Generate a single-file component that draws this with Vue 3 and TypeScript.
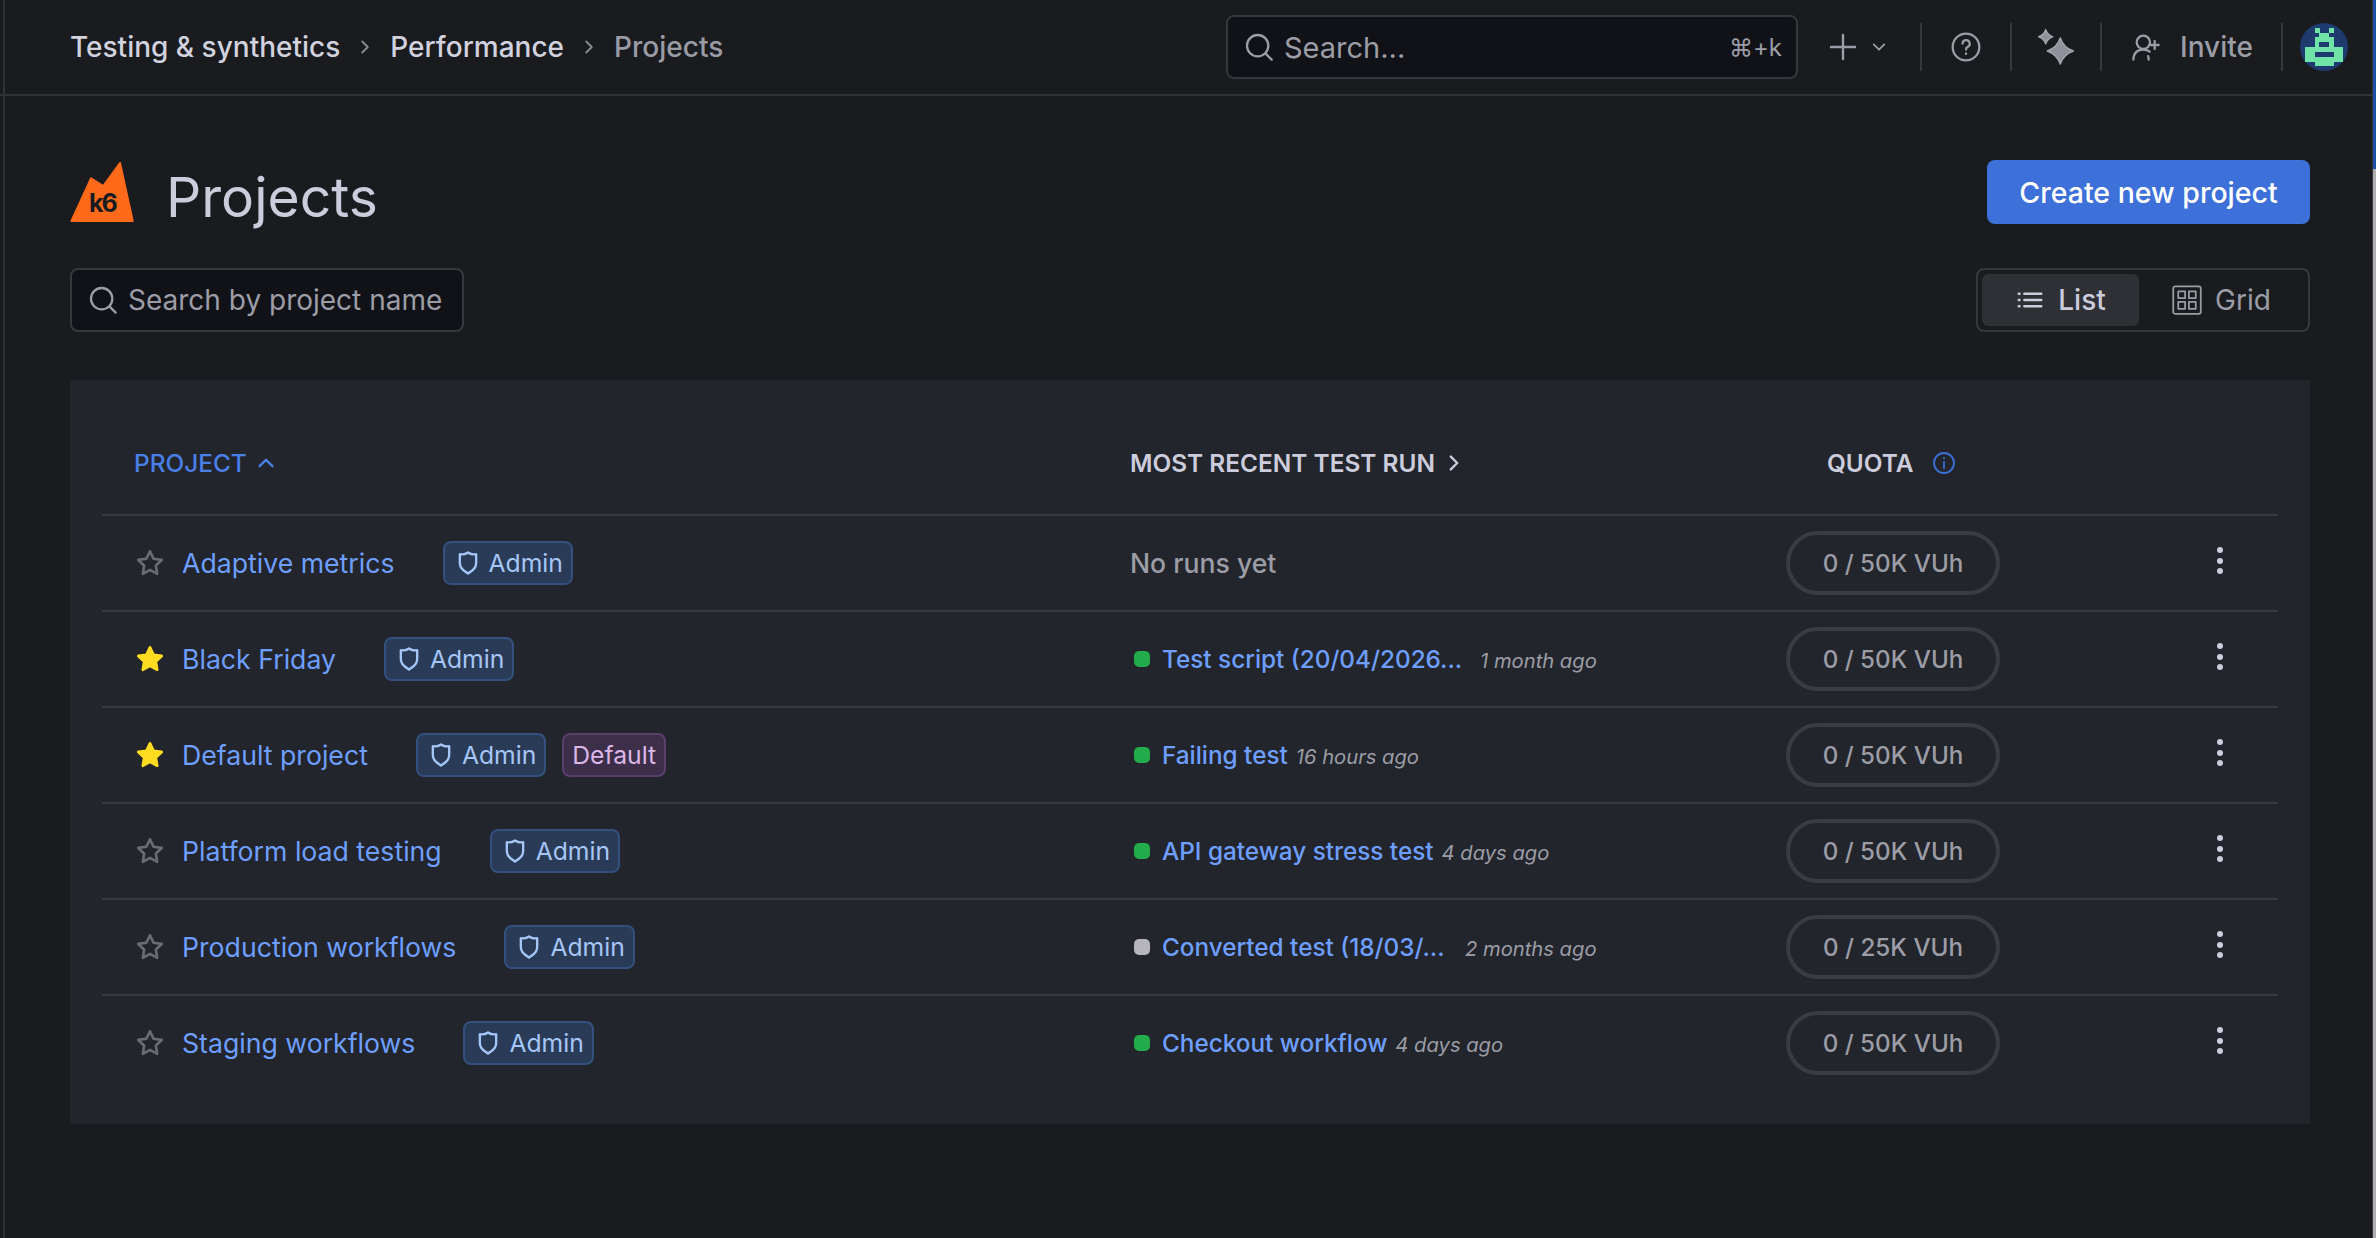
<script setup lang="ts">
interface Run { name: string; ago: string; status: 'ok' | 'idle'; width?: number }
interface Project { name: string; starred: boolean; isDefault?: boolean; run: Run | null; quota: string }

const projects: Project[] = [
  { name: 'Adaptive metrics', starred: false, run: null, quota: '0 / 50K VUh' },
  { name: 'Black Friday', starred: true, run: { name: 'Test script (20/04/2026...', ago: '1 month ago', status: 'ok', width: 310 }, quota: '0 / 50K VUh' },
  { name: 'Default project', starred: true, isDefault: true, run: { name: 'Failing test', ago: '16 hours ago', status: 'ok' }, quota: '0 / 50K VUh' },
  { name: 'Platform load testing', starred: false, run: { name: 'API gateway stress test', ago: '4 days ago', status: 'ok' }, quota: '0 / 50K VUh' },
  { name: 'Production workflows', starred: false, run: { name: 'Converted test (18/03/...', ago: '2 months ago', status: 'idle', width: 295 }, quota: '0 / 25K VUh' },
  { name: 'Staging workflows', starred: false, run: { name: 'Checkout workflow', ago: '4 days ago', status: 'ok' }, quota: '0 / 50K VUh' },
]
const shield = 'M19.63,3.65a1,1,0,0,0-.84-.2,8,8,0,0,1-6.22-1.27,1,1,0,0,0-1.14,0A8,8,0,0,1,5.21,3.45a1,1,0,0,0-.84.2A1,1,0,0,0,4,4.43v7.45a9,9,0,0,0,3.77,7.33l3.65,2.6a1,1,0,0,0,1.16,0l3.65-2.6A9,9,0,0,0,20,11.88V4.43A1,1,0,0,0,19.63,3.65ZM18,11.88a7,7,0,0,1-2.93,5.7L12,19.77,8.93,17.58A7,7,0,0,1,6,11.88V5.58a10,10,0,0,0,6-1.39,10,10,0,0,0,6,1.39Z'
const star = 'M12 3.2l2.7 5.6 6.1.9-4.4 4.3 1 6.1L12 17.2l-5.4 2.9 1-6.1-4.4-4.3 6.1-.9z'
</script>

<template>
  <div class="page">
    <header class="topbar">
      <nav class="crumbs">
        <span>Testing &amp; synthetics</span>
        <svg class="sep" viewBox="0 0 24 24"><path d="M9 6l6 6-6 6" /></svg>
        <span>Performance</span>
        <svg class="sep" viewBox="0 0 24 24"><path d="M9 6l6 6-6 6" /></svg>
        <span class="crumb-last">Projects</span>
      </nav>
      <div class="top-actions">
        <div class="global-search">
          <svg class="ico-search" viewBox="0 0 24 24"><circle cx="11" cy="11" r="8" /><path d="M17 17l4.500 4.500" /></svg>
          <span class="gs-text">Search...</span>
          <span class="gs-key">⌘+k</span>
        </div>
        <div class="plus">
          <svg class="plus-ico" viewBox="0 0 24 24"><path d="M12 3v18M3 12h18" /></svg>
          <svg class="plus-chev" viewBox="0 0 24 24"><path d="M5 8.500l7 7 7-7" /></svg>
        </div>
        <i class="vr" />
        <div class="top-btn">
          <svg class="ico32" viewBox="0 0 24 24"><circle cx="12" cy="12" r="10" /><path d="M9.400 9.500a2.700 2.700 0 1 1 4 2.400c-.9.500-1.400 1-1.400 2" /><path d="M12 16.800v.4" /></svg>
        </div>
        <i class="vr" />
        <div class="top-btn">
          <svg class="spark" viewBox="0 0 40 40">
            <path d="M24.300 11Q27.500 20.800 37.300 24Q27.500 27.200 24.300 37Q21 27.200 11.300 24Q21 20.800 24.300 11Z" />
            <path d="M9.700 2.700Q11.500 8 16.700 9.700Q11.500 11.400 9.700 16.700Q8 11.400 2.700 9.700Q8 8 9.700 2.700Z" />
          </svg>
        </div>
        <i class="vr" />
        <div class="invite">
          <svg class="ico32" viewBox="0 0 24 24"><circle cx="10" cy="8.500" r="5" /><path d="M2.500 21.500c.3-4.800 3-7.500 7.500-7.500 2 0 3.500.5 4.800 1.500M14 21.500c0-1-.1-1.900-.4-2.700M18.500 7.500v6M15.500 10.500h6" /></svg>
          <span>Invite</span>
        </div>
        <i class="vr" />
        <svg class="avatar" viewBox="0 0 48 48" shape-rendering="crispEdges">
          <circle cx="24" cy="24" r="24" fill="#1f3a6e" shape-rendering="auto" />
          <g fill="#6fe3a8">
            <rect x="14.500" y="4.700" width="5" height="5" />
            <rect x="29" y="4.700" width="5" height="5" />
            <rect x="19" y="9.500" width="10" height="5" />
            <rect x="14.500" y="14.300" width="19" height="10" />
            <rect x="4.700" y="24" width="38.600" height="14.500" />
            <rect x="14.500" y="38" width="19" height="5" />
          </g>
          <rect x="19" y="19" width="10" height="5" fill="#1f3a6e" />
          <rect x="14.500" y="29" width="19" height="5" fill="#1f3a6e" />
        </svg>
      </div>
    </header>

    <main class="content">
      <div class="title-row">
        <div class="title">
          <div class="logo">
            <svg viewBox="0 0 64 62" class="logo-mark"><path d="M1.500 59 L21 16.300 L33.300 24 L50 1 L62.700 59 Z" fill="#ff6a1a" stroke="#ff6a1a" stroke-width="2" stroke-linejoin="round" /></svg>
            <span class="logo-text">k6</span>
          </div>
          <h1>Projects</h1>
        </div>
        <button class="primary">Create new project</button>
      </div>

      <div class="filter-row">
        <label class="search">
          <svg class="ico-search" viewBox="0 0 24 24"><circle cx="11" cy="11" r="8" /><path d="M17 17l4.500 4.500" /></svg>
          <span>Search by project name</span>
        </label>
        <div class="toggle">
          <div class="toggle-item active">
            <svg class="ico28 list-ico" viewBox="0 0 24 24"><path d="M7.500 7H21M7.500 12H21M7.500 17H21M3 7h.6M3 12h.6M3 17h.6" /></svg>
            <span>List</span>
          </div>
          <div class="toggle-item">
            <svg class="ico28 thin" viewBox="0 0 24 24"><rect x="1" y="1" width="22" height="22" rx="1.500" /><rect x="5" y="5" width="5.500" height="5.500" /><rect x="13.500" y="5" width="5.500" height="5.500" /><rect x="5" y="13.500" width="5.500" height="5.500" /><rect x="13.500" y="13.500" width="5.500" height="5.500" /></svg>
            <span>Grid</span>
          </div>
        </div>
      </div>

      <section class="table">
        <div class="row head">
          <div class="th sorted">PROJECT
            <svg class="th-ico" viewBox="0 0 24 24"><path d="M5 15.500l7-7 7 7" /></svg>
          </div>
          <div class="th">MOST RECENT TEST RUN
            <svg class="th-ico" viewBox="0 0 24 24"><path d="M8.500 5l7 7-7 7" /></svg>
          </div>
          <div class="th quota-th">QUOTA
            <svg class="info" viewBox="0 0 24 24"><circle cx="12" cy="12" r="10" /><path d="M12 11v6M12 7v.4" /></svg>
          </div>
          <div />
        </div>

        <div v-for="p in projects" :key="p.name" class="row">
          <div class="cell-project">
            <svg v-if="p.starred" class="star on" viewBox="0 0 24 24"><path :d="star" /></svg>
            <svg v-else class="star" viewBox="0 0 24 24"><path :d="star" /></svg>
            <a class="link pname">{{ p.name }}</a>
            <span class="tag admin">
              <svg class="tag-ico" viewBox="0 0 24 24"><path :d="shield" /></svg>Admin
            </span>
            <span v-if="p.isDefault" class="tag def">Default</span>
          </div>
          <div class="cell-run">
            <span v-if="!p.run" class="no-runs">No runs yet</span>
            <template v-else>
              <i class="dot" :class="p.run.status" />
              <a class="link run-name" :style="p.run.width ? { width: p.run.width + 'px' } : undefined">{{ p.run.name }}</a>
              <em class="ago">{{ p.run.ago }}</em>
            </template>
          </div>
          <div><span class="pill">{{ p.quota }}</span></div>
          <div class="kebab"><i /><i /><i /></div>
        </div>
      </section>
    </main>
  </div>
</template>

<style>
html, body { margin: 0; background: #181b1f; }
</style>

<style scoped>
* { box-sizing: border-box; }
.page {
  position: relative; width: 2376px; height: 1238px; overflow: hidden; background: #191b1f;
  font-family: Inter, "Noto Sans", sans-serif; font-size: 28px; color: #ccccdc;
}
/* Window chrome: thin rail on the left, edge strip on the right */
.page::before { content: ""; position: absolute; left: 3px; top: 0; bottom: 0; width: 2px; background: #2f3136; }
.page::after {
  content: ""; position: absolute; right: 0; top: 0; bottom: 0; width: 3px; border-left: 1px solid #34363b;
  background: linear-gradient(#1a50a8 0 169px, #aeaeb0 169px);
}
svg { fill: none; stroke: currentColor; stroke-width: 1.5; stroke-linecap: round; stroke-linejoin: round; flex: none; }
.topbar {
  height: 96px; padding: 0 28px 0 70px; display: flex; align-items: center; justify-content: space-between;
  border-bottom: 2px solid #2f3136;
}
.crumbs { display: flex; align-items: center; font-weight: 500; color: #d2d2df; }
.crumbs .sep { width: 22px; height: 22px; margin: 0 14px; color: #8b8c94; stroke-width: 2; }
.crumb-last { color: #9a9ba4; }
.top-actions { display: flex; align-items: center; color: #9c9da6; }
.global-search {
  width: 572px; height: 64px; display: flex; align-items: center; gap: 9px; padding: 0 14px 0 15px;
  background: #111217; border: 2px solid #36383d; border-radius: 8px;
}
.ico-search { width: 32px; height: 32px; stroke-width: 1.7; }
.ico28 { width: 30px; height: 30px; stroke-width: 1.7; }
.gs-text { flex: 1; font-size: 29px; }
.gs-key { font-size: 24px; }
.plus { width: 122px; height: 64px; display: flex; align-items: center; padding-left: 29px; gap: 11px; }
.plus-ico { width: 32px; height: 32px; stroke-width: 1.8; }
.plus-chev { width: 18px; height: 18px; stroke-width: 2.4; }
.vr { width: 2px; height: 48px; background: #36383d; }
.top-btn { width: 88px; display: flex; justify-content: center; align-items: center; height: 64px; }
.ico32 { width: 32px; height: 32px; stroke-width: 1.7; }
.spark { width: 40px; height: 40px; fill: #8f9099; stroke: #a3a4ad; stroke-width: 1.5; }
.invite { width: 179px; display: flex; align-items: center; gap: 18px; padding-left: 28px; font-weight: 500; }
.avatar { width: 48px; height: 48px; margin-left: 17px; stroke: none; }

.content { padding: 64px 66px 0 70px; }
.title-row { display: flex; justify-content: space-between; align-items: flex-start; height: 108px; }
.title { display: flex; align-items: flex-start; gap: 32px; height: 72px; }
.logo { position: relative; width: 64px; height: 62px; margin-top: 2px; }
.logo-mark { width: 64px; height: 62px; display: block; stroke: none; }
.logo-text { position: absolute; left: 19px; top: 30px; font-size: 25px; line-height: 22px; letter-spacing: -2px; font-weight: 700; color: #181b1f; }
h1 { margin: 1px 0 0; font-size: 55.2px; font-weight: 400; color: #ccccdc; line-height: 72px; }
.primary {
  width: 323px; height: 64px; border: 0; border-radius: 8px; background: #3d71d9; color: #fff;
  font: 500 28.5px Inter, sans-serif; padding: 0;
}
.filter-row { display: flex; justify-content: space-between; height: 64px; }
.search {
  width: 394px; display: flex; align-items: center; gap: 9px; padding: 0 15px;
  background: #111217; border: 2px solid #36383d; border-radius: 8px; color: #9c9da6;
}
.toggle { width: 334px; height: 64px; display: flex; align-items: center; padding: 4px; border: 2px solid #36383d; border-radius: 8px; }
.toggle-item { flex: 1; height: 100%; display: flex; align-items: center; justify-content: center; gap: 13px; color: #9c9da6; border-radius: 6px; }
.toggle-item.active { background: #2f3036; color: #ccccdc; font-weight: 500; flex: 0 0 157px; }
.list-ico { stroke-width: 2; }
.thin { stroke-width: 1.4; }

.table { margin-top: 48px; background: #22252b; padding: 32px; height: 744px; }
.row {
  display: grid; grid-template-columns: 1028px 657px 433px 1fr; align-items: center;
  height: 96px; border-top: 2px solid #383a40;
}
.head { height: 102px; border-top: 0; font-weight: 600; font-size: 24.4px; }
.th { display: flex; align-items: center; color: #ccccdc; }
.th:first-child { padding-left: 32px; }
.sorted { color: #4a7fe6; font-weight: 500; }
.th-ico { width: 22px; height: 22px; margin-left: 8px; stroke-width: 2.6; }
.quota-th { padding-left: 40px; }
.info { width: 24px; height: 24px; margin-left: 18px; color: #3d71d9; stroke-width: 1.8; }
.cell-project { display: flex; align-items: center; padding-left: 32px; }
.star { width: 32px; height: 32px; margin-right: 16px; color: #6b6c72; stroke-width: 2; }
.star.on { color: #ffdc1f; fill: #ffdc1f; }
.link { color: #6e9fff; font-size: 26.67px; }
.pname { margin-right: 48px; }
.tag {
  height: 44px; display: inline-flex; align-items: center; border-radius: 8px; font-size: 24.7px; border: 2px solid; margin-top: -1px;
}
.admin { background: #2a3b57; border-color: #33507f; color: #a6c6f7; padding: 0 8px 0 9px; margin-right: 16px; gap: 7px; }
.tag-ico { width: 28px; height: 28px; fill: currentColor; stroke: none; }
.def { background: #3d2f4a; border-color: #5a3f6d; color: #dcb8e8; padding: 0 8px; }
.cell-run { display: flex; align-items: center; }
.no-runs { color: #9c9da6; font-weight: 500; font-size: 26.6px; }
.dot { width: 16px; height: 16px; border-radius: 5px; margin: 0 12px 0 4px; background: #22ab4b; }
.dot.idle { background: #b5b5bb; }
.run-name { white-space: nowrap; font-size: 24.3px; font-weight: 500; }
.ago { margin: 3px 0 0 8px; font-size: 20.2px; color: #9c9da6; font-style: italic; }
.pill {
  display: inline-flex; width: 214px; height: 64px; align-items: center; justify-content: center; margin-left: -1px;
  border: 4px solid #3a3c42; border-radius: 32px; color: #9c9da6; font-size: 24.2px; font-weight: 500;
}
.kebab { display: flex; flex-direction: column; align-items: center; gap: 4.5px; margin-top: -5px; margin-left: -58px; }
.kebab i { width: 6px; height: 6px; border-radius: 50%; background: #ccccdc; }
</style>
